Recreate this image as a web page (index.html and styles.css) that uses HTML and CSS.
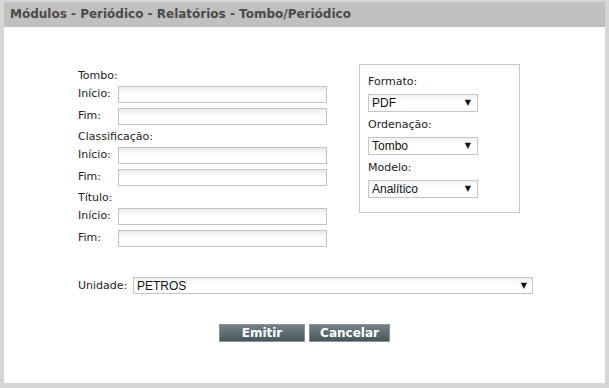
FILE: index.html
```html
<!DOCTYPE html>
<html lang="pt">
<head>
    <meta charset="UTF-8">
    <title>Tombo/Periódico</title>
    <link rel="stylesheet" href="styles.css">
</head>

<body>
    <div class="window">
        <div class="window-title">Módulos - Periódico - Relatórios - Tombo/Periódico</div>

        <div class="form-area">
            <div class="ranges">
                <div class="group-label">Tombo:</div>
                <label>Início:</label><input type="text">
                <label>Fim:</label><input type="text">

                <div class="group-label">Classificação:</div>
                <label>Início:</label><input type="text">
                <label>Fim:</label><input type="text">

                <div class="group-label">Título:</div>
                <label>Início:</label><input type="text">
                <label>Fim:</label><input type="text">
            </div>

            <div class="options-box">
                <label>Formato:</label>
                <span class="select-wrap">
                    <select><option>PDF</option></select>
                </span>
                <label>Ordenação:</label>
                <span class="select-wrap">
                    <select><option>Tombo</option></select>
                </span>
                <label>Modelo:</label>
                <span class="select-wrap">
                    <select><option>Analítico</option></select>
                </span>
            </div>
        </div>

        <div class="unit-row">
            <label>Unidade:</label>
            <span class="select-wrap wide">
                <select><option>PETROS</option></select>
            </span>
        </div>

        <div class="button-container">
            <button>Emitir</button>
            <button class="cancel">Cancelar</button>
        </div>
    </div>
</body>
</html>
```

FILE: styles.css
```css
body {
    margin: 0;
    background-color: #d6d6d6;
    font-family: "DejaVu Sans", Verdana, sans-serif;
    font-size: 11px;
    color: #222;
}

.window {
    width: 601px;
    height: 381px;
    margin: 2px 0 0 4px;
    background-color: #fff;
}

.window-title {
    height: 25px;
    line-height: 25px;
    padding-left: 6px;
    background-color: #c0c0c0;
    color: #4a4a4a;
    font-weight: bold;
    font-size: 12px;
}

.form-area {
    display: flex;
    align-items: flex-start;
    padding-top: 37px;
}

.ranges {
    display: grid;
    grid-template-columns: 40px 209px;
    margin-left: 74px;
    margin-top: 3px;
}

.ranges .group-label {
    grid-column: 1 / 3;
    height: 17px;
    line-height: 17px;
}

.ranges label {
    height: 22px;
    line-height: 20px;
}

.ranges input {
    box-sizing: border-box;
    width: 209px;
    height: 17px;
    margin: 2px 0 3px;
    padding: 0 3px;
    border: 1px solid #c2c2c2;
    background: linear-gradient(#ebebeb, #fff 7px);
    outline: none;
}

.options-box {
    box-sizing: border-box;
    width: 161px;
    height: 149px;
    margin-left: 32px;
    padding: 4px 0 0 8px;
    border: 1px solid #c8c8c8;
}

.options-box label {
    display: block;
    line-height: 25px;
    height: 25px;
}

.select-wrap {
    position: relative;
    display: block;
    width: 110px;
    height: 18px;
}

.select-wrap select {
    appearance: none;
    -webkit-appearance: none;
    box-sizing: border-box;
    width: 100%;
    height: 100%;
    margin: 0;
    padding: 0 3px;
    border: 1px solid #c6c6c6;
    border-radius: 0;
    background: linear-gradient(#f1f1f1, #fff 6px);
    font-family: "Liberation Sans", Arial, sans-serif;
    font-size: 12px;
    color: #111;
    outline: none;
}

.select-wrap::after {
    content: "\25BC";
    position: absolute;
    right: 7px;
    top: 4px;
    font-size: 8px;
    color: #111;
    pointer-events: none;
}

.unit-row {
    display: flex;
    align-items: center;
    margin: 27px 0 0 74px;
}

.unit-row label {
    width: 55px;
}

.select-wrap.wide {
    width: 400px;
    height: 17px;
}

.select-wrap.wide::after {
    right: 6px;
}

.button-container {
    display: flex;
    justify-content: center;
    gap: 4px;
    margin-top: 30px;
}

button {
    width: 86px;
    height: 18px;
    padding: 0;
    border: 1px solid #8c9295;
    background: linear-gradient(#71838a, #46565c);
    color: #fff;
    font-family: "DejaVu Sans", Verdana, sans-serif;
    font-weight: bold;
    font-size: 12px;
    cursor: pointer;
}

button.cancel {
    width: 81px;
}
```
